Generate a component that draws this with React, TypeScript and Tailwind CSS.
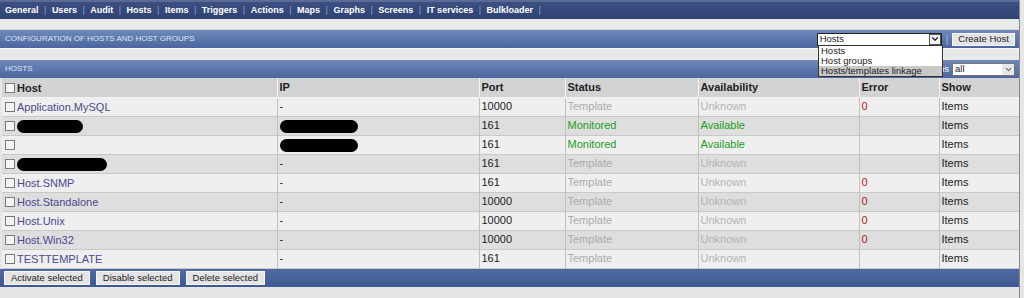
import { ChevronDown } from 'lucide-react';

type Row = {
  host: string;
  hostBlob?: number;
  ip: string;
  ipBlob?: number;
  port: string;
  status: 'Template' | 'Monitored';
  avail: 'Unknown' | 'Available';
  error: string;
};

const ROWS: Row[] = [
  { host: 'Application.MySQL', ip: '-', port: '10000', status: 'Template', avail: 'Unknown', error: '0' },
  { host: '', hostBlob: 66, ip: '', ipBlob: 78, port: '161', status: 'Monitored', avail: 'Available', error: '' },
  { host: '', ip: '', ipBlob: 78, port: '161', status: 'Monitored', avail: 'Available', error: '' },
  { host: '', hostBlob: 90, ip: '-', port: '161', status: 'Template', avail: 'Unknown', error: '' },
  { host: 'Host.SNMP', ip: '-', port: '161', status: 'Template', avail: 'Unknown', error: '0' },
  { host: 'Host.Standalone', ip: '-', port: '10000', status: 'Template', avail: 'Unknown', error: '0' },
  { host: 'Host.Unix', ip: '-', port: '10000', status: 'Template', avail: 'Unknown', error: '0' },
  { host: 'Host.Win32', ip: '-', port: '10000', status: 'Template', avail: 'Unknown', error: '0' },
  { host: 'TESTTEMPLATE', ip: '-', port: '161', status: 'Template', avail: 'Unknown', error: '' },
];

const MENU = ['General', 'Users', 'Audit', 'Hosts', 'Items', 'Triggers', 'Actions', 'Maps', 'Graphs', 'Screens', 'IT services', 'Bulkloader'];

function Box() {
  return <span className="inline-block w-[10px] h-[10px] border border-[#7a7a7a] bg-[#f4f4f4] align-middle mr-[2px]" />;
}

function Blob({ w }: { w: number }) {
  return <span className="inline-block h-[13px] bg-black rounded-full align-middle" style={{ width: w }} />;
}

export default function App() {
  return (
    <div className="relative w-[1024px] h-[298px] bg-[#e6e6e6] overflow-hidden text-[#222] [font-family:'Liberation_Sans',Arial,sans-serif]">
      <div className="w-[1020px] border-r border-[#8a8a8a] h-full">
        {/* main menu */}
        <div className="h-[19px] bg-gradient-to-b from-[#3c4f82] to-[#2f4273] flex items-center pl-[5px] border-t-2 border-[#5b6b96]">
          {MENU.map((m) => (
            <div key={m} className="flex items-center">
              <span className="text-white font-bold text-[9px]">{m}</span>
              <span className="text-[#8d9cc2] text-[9px] mx-[5.5px]">|</span>
            </div>
          ))}
        </div>
        <div className="h-[11px] bg-[#e9e9e9] border-b border-[#d6d6d6]" />

        {/* configuration header */}
        <div className="h-[18px] bg-gradient-to-b from-[#7089ba] to-[#4b66a0] flex items-center justify-between pl-[5px] pr-[4px]">
          <span className="text-[8px] text-[#dfe6f4]">CONFIGURATION OF HOSTS AND HOST GROUPS</span>
          <div className="flex items-center">
            <div className="w-[125px] h-[13px] bg-white border border-[#222] flex items-center justify-between">
              <span className="text-[9.5px] pl-[2px] leading-none">Hosts</span>
              <span className="w-[12px] h-[11px] bg-[#f2f2f2] border border-[#555] flex items-center justify-center">
                <ChevronDown size={10} strokeWidth={3} className="text-[#222]" />
              </span>
            </div>
            <span className="text-[#a9b8d8] text-[10px] mx-[4px]">|</span>
            <button className="h-[13px] px-[5px] bg-[#e4e4e4] border border-[#f8f8f8] text-[9.5px] leading-none text-[#222]">Create Host</button>
          </div>
        </div>
        <div className="h-[12px] bg-[#e9e9e9] border-t border-[#f6f6f6]" />

        {/* hosts header */}
        <div className="h-[18px] bg-gradient-to-b from-[#7089ba] to-[#4b66a0] flex items-center justify-between pl-[5px] pr-[4px]">
          <span className="text-[8px] text-[#dfe6f4]">HOSTS</span>
          <div className="flex items-center gap-[3px]">
            <span className="text-[9.5px] text-white">Groups</span>
            <div className="w-[63px] h-[13px] bg-white border border-[#777] flex items-center justify-between">
              <span className="text-[9.5px] pl-[2px] leading-none">all</span>
              <span className="w-[12px] h-[11px] bg-[#e8e8e8] flex items-center justify-center">
                <ChevronDown size={9} strokeWidth={3} className="text-[#666]" />
              </span>
            </div>
          </div>
        </div>

        {/* table */}
        <table className="ml-[2px] w-[1017px] border-collapse table-fixed text-[11px]">
          <colgroup>
            <col className="w-[275px]" />
            <col className="w-[202px]" />
            <col className="w-[86px]" />
            <col className="w-[133px]" />
            <col className="w-[161px]" />
            <col className="w-[80px]" />
            <col className="w-[80px]" />
          </colgroup>
          <thead>
            <tr className="h-[19px] bg-[#d3d3d3] font-bold text-left">
              <th className="pl-[3px] border-b border-[#f2f2f2]"><Box /><span className="align-middle">Host</span></th>
              {['IP', 'Port', 'Status', 'Availability', 'Error', 'Show'].map((h) => (
                <th key={h} className="pl-[2px] border-l border-[#b8b8b8] border-b border-[#f2f2f2]">{h}</th>
              ))}
            </tr>
          </thead>
          <tbody>
            {ROWS.map((r, i) => (
              <tr key={i} className={`h-[19px] ${i % 2 === 0 ? 'bg-[#efefef]' : 'bg-[#dedede]'} border-b border-[#c9c9c9]`}>
                <td className="pl-[3px] whitespace-nowrap">
                  <Box />
                  {r.hostBlob ? <Blob w={r.hostBlob} /> : <span className="align-middle text-[#4a4a8e]">{r.host}</span>}
                </td>
                <td className="pl-[2px] border-l border-[#c0c0c0]">
                  {r.ipBlob ? <Blob w={r.ipBlob} /> : r.ip}
                </td>
                <td className="pl-[2px] border-l border-[#c0c0c0]">{r.port}</td>
                <td className={`pl-[2px] border-l border-[#c0c0c0] ${r.status === 'Monitored' ? 'text-[#1c9e1c]' : 'text-[#ababab]'}`}>{r.status}</td>
                <td className={`pl-[2px] border-l border-[#c0c0c0] ${r.avail === 'Available' ? 'text-[#1c9e1c]' : 'text-[#b4b4b4]'}`}>{r.avail}</td>
                <td className="pl-[2px] border-l border-[#c0c0c0] text-[#b02020]">{r.error}</td>
                <td className="pl-[2px] border-l border-[#c0c0c0]">Items</td>
              </tr>
            ))}
          </tbody>
        </table>

        {/* footer */}
        <div className="h-[18px] bg-gradient-to-b from-[#4f6aa3] to-[#3f5a92] flex items-center gap-[6px] pl-[4px]">
          {['Activate selected', 'Disable selected', 'Delete selected'].map((b) => (
            <button key={b} className="h-[14px] px-[6px] bg-[#e4e4e4] border border-[#f6f6f6] text-[9.5px] leading-none text-[#222]">{b}</button>
          ))}
        </div>
      </div>

      {/* open dropdown list */}
      <div className="absolute left-[818px] top-[45px] w-[125px] bg-white border border-[#333] text-[9.5px] leading-[10px]">
        <div className="pl-[2px]">Hosts</div>
        <div className="pl-[2px]">Host groups</div>
        <div className="pl-[2px] bg-[#c8c8c8]">Hosts/templates linkage</div>
      </div>
    </div>
  );
}
